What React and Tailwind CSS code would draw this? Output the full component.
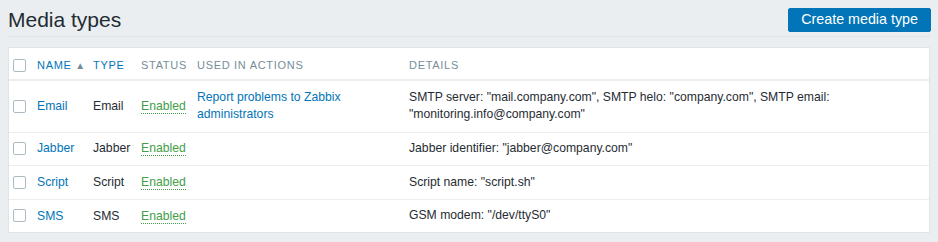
import React from 'react';

const rows = [
  {
    name: 'Email',
    type: 'Email',
    actions: ['Report problems to Zabbix administrators'],
    details: 'SMTP server: "mail.company.com", SMTP helo: "company.com", SMTP email: "monitoring.info@company.com"',
    h: 'h-[52px]',
  },
  { name: 'Jabber', type: 'Jabber', actions: [], details: 'Jabber identifier: "jabber@company.com"', h: 'h-[33px]' },
  { name: 'Script', type: 'Script', actions: [], details: 'Script name: "script.sh"', h: 'h-[34px]' },
  { name: 'SMS', type: 'SMS', actions: [], details: 'GSM modem: "/dev/ttyS0"', h: 'h-[33px]' },
];

function Checkbox() {
  return <span className="block w-[13px] h-[13px] border border-[#acbbc2] rounded-[2px] bg-white" />;
}

export default function App() {
  return (
    <div className="w-[938px] h-[242px] bg-[#ebeef0] text-[#1f2c33] px-2 font-['Liberation_Sans',Arial,sans-serif]">
      <header className="flex items-center justify-between h-[37px] border-b border-[#dde2e5]">
        <h1 className="text-[21px] leading-none pt-[3px]">Media types</h1>
        <button className="h-6 px-[12px] mt-[3px] mr-[-1px] bg-[#0275b8] text-white text-[14.3px] rounded-[2px] border border-[#0275b8]">
          Create media type
        </button>
      </header>

      <div className="mt-[10px] w-[922px] bg-white border border-[#dfe4e7]">
        <table className="w-full table-fixed border-collapse text-[12.2px]">
          <colgroup>
            <col className="w-[22px]" />
            <col className="w-[56px]" />
            <col className="w-[48px]" />
            <col className="w-[56px]" />
            <col className="w-[212px]" />
            <col />
          </colgroup>
          <thead>
            <tr className="h-[32px] border-b-2 border-[#ebeef0] text-[11px] uppercase tracking-[0.7px] text-left">
              <th className="pl-[4px] pt-[3px] font-normal"><Checkbox /></th>
              <th className="pl-[6px] pt-[3px] font-normal text-[#0275b8]">
                Name <span className="text-[#768d99] text-[10px]">▲</span>
              </th>
              <th className="pl-[6px] pt-[3px] font-normal text-[#0275b8]">Type</th>
              <th className="pl-[6px] pt-[3px] font-normal text-[#768d99]">Status</th>
              <th className="pl-[6px] pt-[3px] font-normal text-[#768d99]">Used in actions</th>
              <th className="pl-[6px] pt-[3px] font-normal text-[#768d99]">Details</th>
            </tr>
          </thead>
          <tbody>
            {rows.map(r => (
              <tr key={r.name} className={`${r.h} border-b border-[#ebeef0] last:border-b-0`}>
                <td className="pl-[4px]"><Checkbox /></td>
                <td className="pl-[6px] text-[#0275b8]">{r.name}</td>
                <td className="pl-[6px]">{r.type}</td>
                <td className="pl-[6px]">
                  <span className="text-[#429e47] border-b border-dotted border-[#429e47]">Enabled</span>
                </td>
                <td className="pl-[6px] pr-2 text-[#0275b8] leading-[17px]">{r.actions.join(', ')}</td>
                <td className="pl-[6px] pr-[88px] leading-[17px]">{r.details}</td>
              </tr>
            ))}
          </tbody>
        </table>
      </div>
    </div>
  );
}
